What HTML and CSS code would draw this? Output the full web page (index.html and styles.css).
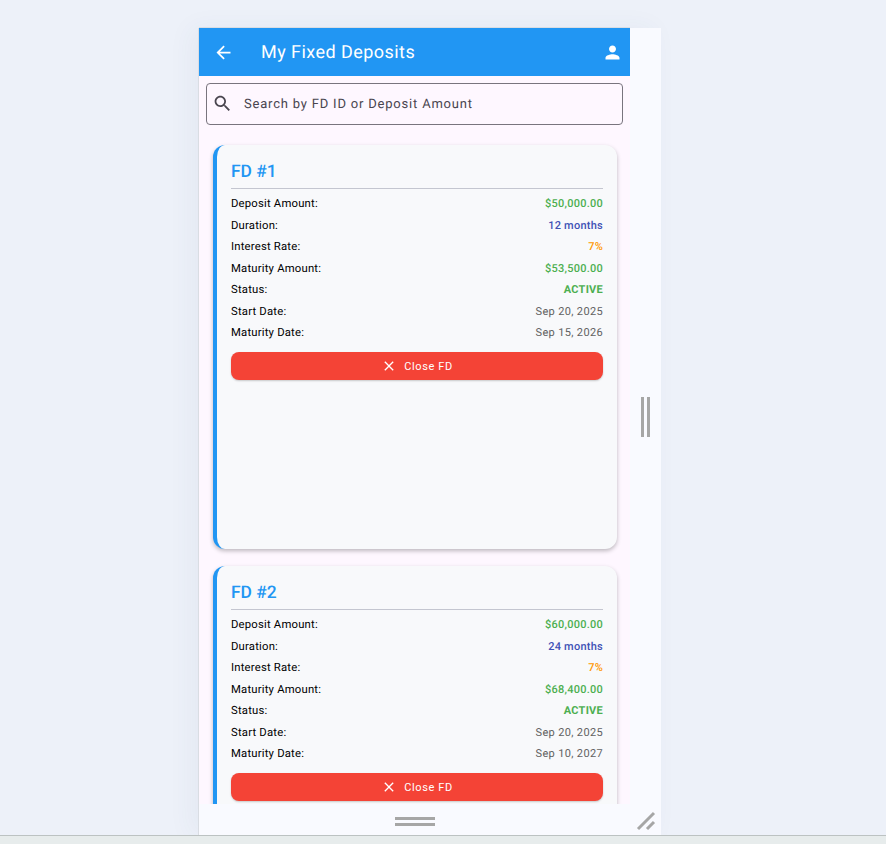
FILE: index.html
```html
<!DOCTYPE html>
<html lang="en">
<head>
    <meta charset="UTF-8">
    <meta name="viewport" content="width=device-width, initial-scale=1.0">
    <title>My Fixed Deposits</title>
    <link rel="stylesheet" href="styles.css">
</head>
<body>
    <div class="stage">
        <div class="frame">
            <div class="app">
                <header class="appbar">
                    <svg class="icon back" viewBox="0 0 24 24"><path d="M20 11H7.83l5.59-5.59L12 4l-8 8 8 8 1.41-1.41L7.83 13H20v-2z"/></svg>
                    <h1 class="appbar-title">My Fixed Deposits</h1>
                    <svg class="icon person" viewBox="0 0 24 24"><path d="M12 12c2.21 0 4-1.79 4-4s-1.79-4-4-4-4 1.79-4 4 1.79 4 4 4zm0 2c-2.67 0-8 1.34-8 4v2h16v-2c0-2.66-5.33-4-8-4z"/></svg>
                </header>

                <div class="search">
                    <svg class="icon search-icon" viewBox="0 0 24 24"><path d="M15.5 14h-.79l-.28-.27C15.41 12.59 16 11.11 16 9.5 16 5.91 13.09 3 9.5 3S3 5.91 3 9.5 5.91 16 9.5 16c1.61 0 3.09-.59 4.23-1.57l.27.28v.79l5 4.99L20.49 19l-4.99-5zm-6 0C7.01 14 5 11.99 5 9.5S7.01 5 9.5 5 14 7.01 14 9.5 11.99 14 9.5 14z"/></svg>
                    <span class="search-text">Search by FD ID or Deposit Amount</span>
                </div>

                <div class="list">
                    <div class="card">
                        <h2 class="card-title">FD #1</h2>
                        <div class="row"><span>Deposit Amount:</span><span class="val green">$50,000.00</span></div>
                        <div class="row"><span>Duration:</span><span class="val indigo">12 months</span></div>
                        <div class="row"><span>Interest Rate:</span><span class="val orange">7%</span></div>
                        <div class="row"><span>Maturity Amount:</span><span class="val green">$53,500.00</span></div>
                        <div class="row"><span>Status:</span><span class="val green bold">ACTIVE</span></div>
                        <div class="row"><span>Start Date:</span><span class="val grey">Sep 20, 2025</span></div>
                        <div class="row"><span>Maturity Date:</span><span class="val grey">Sep 15, 2026</span></div>
                        <button class="close-btn">
                            <svg class="icon close-icon" viewBox="0 0 24 24"><path d="M19 6.41 17.59 5 12 10.59 6.41 5 5 6.41 10.59 12 5 17.59 6.41 19 12 13.41 17.59 19 19 17.59 13.41 12z"/></svg>
                            <span class="close-label">Close FD</span>
                        </button>
                    </div>

                    <div class="card">
                        <h2 class="card-title">FD #2</h2>
                        <div class="row"><span>Deposit Amount:</span><span class="val green">$60,000.00</span></div>
                        <div class="row"><span>Duration:</span><span class="val indigo">24 months</span></div>
                        <div class="row"><span>Interest Rate:</span><span class="val orange">7%</span></div>
                        <div class="row"><span>Maturity Amount:</span><span class="val green">$68,400.00</span></div>
                        <div class="row"><span>Status:</span><span class="val green bold">ACTIVE</span></div>
                        <div class="row"><span>Start Date:</span><span class="val grey">Sep 20, 2025</span></div>
                        <div class="row"><span>Maturity Date:</span><span class="val grey">Sep 10, 2027</span></div>
                        <button class="close-btn">
                            <svg class="icon close-icon" viewBox="0 0 24 24"><path d="M19 6.41 17.59 5 12 10.59 6.41 5 5 6.41 10.59 12 5 17.59 6.41 19 12 13.41 17.59 19 19 17.59 13.41 12z"/></svg>
                            <span class="close-label">Close FD</span>
                        </button>
                    </div>
                </div>
            </div>

            <div class="side-strip"><div class="grip-v"></div></div>

            <div class="bottom-strip">
                <div class="grip-h"></div>
            </div>
            <div class="corner-strip">
                <svg class="corner" viewBox="0 0 20 20"><path d="M2 18 18 2M11 18l7-7"/></svg>
            </div>
        </div>
    </div>
    <div class="statusbar"></div>
</body>
</html>
```

FILE: styles.css
```css
* {
    box-sizing: border-box;
}
html, body {
    margin: 0;
    height: 100%;
    overflow: hidden;
}
body {
    display: flex;
    flex-direction: column;
    height: 844px;
    background-color: #edf1f9;
    font-family: Roboto, "Liberation Sans", sans-serif;
    color: #000;
    text-rendering: geometricPrecision;
}
.stage {
    flex: 1;
    padding: 28px 0 0 199px;
    min-height: 0;
}
.frame {
    display: grid;
    grid-template-columns: 431px 31px;
    grid-template-rows: 776px 31px;
    width: 462px;
    background-color: #f9faff;
    box-shadow: -1px 0 0 #d9dde3, -8px 0 24px rgba(60, 70, 110, 0.05);
}
.statusbar {
    height: 9px;
    background-color: #e7ecec;
    border-top: 1px solid #bcc2c2;
}

/* app */
.app {
    display: flex;
    flex-direction: column;
    overflow: hidden;
    background-color: #fef7ff;
    box-shadow: 0 -1px 0 #d9dde3;
}
.appbar {
    display: flex;
    align-items: center;
    flex: none;
    height: 48px;
    padding: 0 7px 0 14px;
    background-color: #2196f3;
    color: #fff;
}
.icon {
    display: block;
    flex: none;
    fill: currentColor;
}
.back {
    width: 21px;
    height: 21px;
}
.appbar-title {
    flex: 1;
    margin: 0 0 0 27px;
    font-size: 18px;
    font-weight: 400;
    letter-spacing: 0.45px;
}
.person {
    width: 21px;
    height: 21px;
}

/* search */
.search {
    display: flex;
    align-items: center;
    flex: none;
    height: 42px;
    margin: 7px 7px 0;
    padding: 0 0 1px 5px;
    border: 1px solid #79747e;
    border-radius: 4px;
}
.search-icon {
    width: 21px;
    height: 21px;
    color: #49454f;
}
.search-text {
    margin-left: 11px;
    padding-top: 1px;
    font-size: 13px;
    letter-spacing: 0.8px;
    color: #49454f;
}

/* cards */
.list {
    display: flex;
    flex-direction: column;
    gap: 17px;
    padding: 20px 13px 0 14px;
}
.card {
    flex: none;
    height: 404px;
    padding: 0 14px;
    background-color: #f8f9fb;
    border-left: 4px solid #2196f3;
    border-radius: 12px;
    box-shadow: 0 2px 4px rgba(0, 0, 0, 0.26);
}
.card-title {
    height: 44px;
    margin: 0 0 4px;
    padding-top: 16px;
    border-bottom: 1px solid #c4c6d0;
    font-size: 17.4px;
    line-height: 22px;
    font-weight: 500;
    color: #2196f3;
}
.row {
    display: flex;
    justify-content: space-between;
    align-items: center;
    height: 21.5px;
    font-size: 11.3px;
    font-weight: 400;
    letter-spacing: 0.2px;
}
.val {
    font-size: 11px;
    font-weight: 500;
    letter-spacing: 0.25px;
}
.green {
    color: #4caf50;
}
.indigo {
    color: #3f51b5;
}
.orange {
    color: #ff9800;
}
.val.grey {
    color: #616161;
    font-weight: 400;
    letter-spacing: 0.35px;
}
.val.bold {
    font-weight: 700;
}
.close-btn {
    display: flex;
    align-items: center;
    justify-content: center;
    gap: 7px;
    width: 100%;
    height: 28px;
    margin-top: 8.5px;
    padding: 0;
    border: 0;
    border-radius: 8px;
    background-color: #f44336;
    color: #fff;
    font-family: inherit;
    font-size: 11px;
    font-weight: 400;
    letter-spacing: 0.6px;
    box-shadow: 0 1px 2px rgba(0, 0, 0, 0.2);
}
.close-icon {
    width: 16px;
    height: 16px;
}
.close-label {
    padding-top: 1px;
}

/* resize handles */
.side-strip {
    display: flex;
    align-items: center;
    justify-content: center;
    padding-top: 2px;
}
.grip-v {
    width: 9px;
    height: 40px;
    border-left: 3px solid #a6a6a6;
    border-right: 3px solid #a6a6a6;
}
.bottom-strip {
    display: flex;
    align-items: center;
    justify-content: center;
    padding-top: 3px;
}
.grip-h {
    width: 40px;
    height: 9px;
    border-top: 3px solid #a6a6a6;
    border-bottom: 3px solid #a6a6a6;
}
.corner-strip {
    display: flex;
    align-items: flex-end;
    justify-content: flex-end;
    padding: 0 5px 4px 0;
}
.corner {
    width: 20px;
    height: 20px;
    fill: none;
    stroke: #a6a6a6;
    stroke-width: 3;
}
```
